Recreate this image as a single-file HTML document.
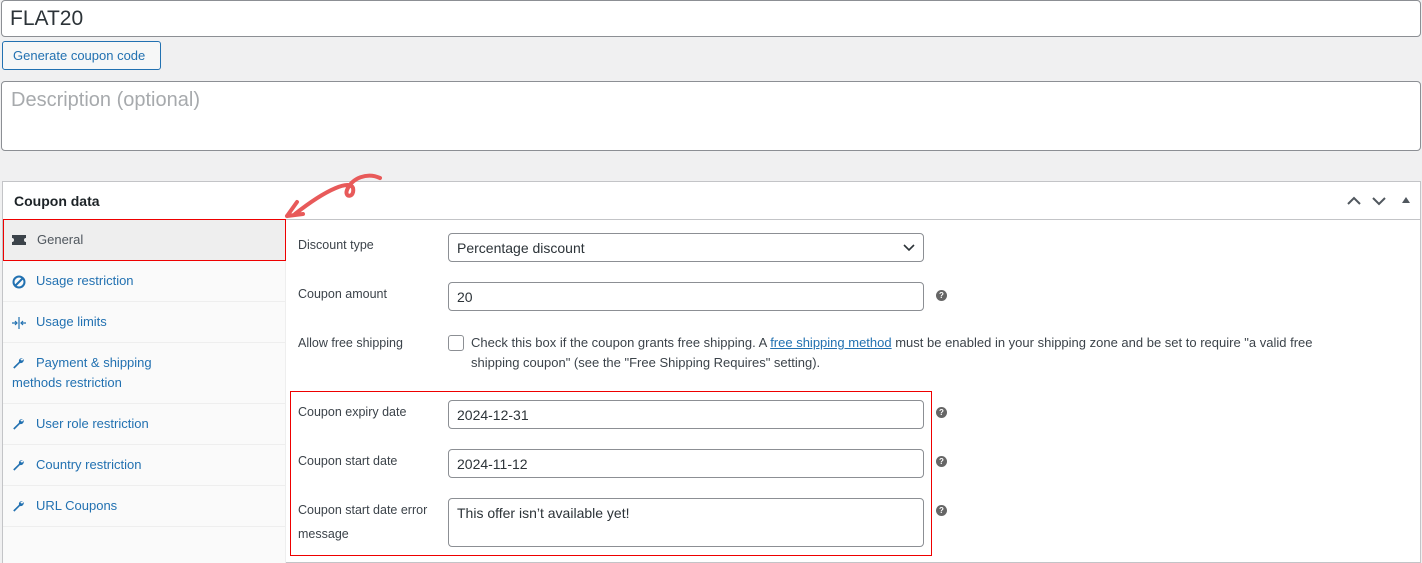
<!DOCTYPE html>
<html><head><style>
*{box-sizing:border-box;margin:0;padding:0}
body{width:1422px;height:563px;background:#f0f0f1;font-family:"Liberation Sans",sans-serif;font-size:13px;color:#3c434a;position:relative;overflow:hidden}
.abs{position:absolute}
.title{left:1px;top:0;width:1420px;height:37px;background:#fff;border:1px solid #8c8f94;border-radius:4px;font-size:21px;color:#2c3338;padding:6px 8px}
.btn{left:2px;top:41px;width:159px;height:29px;border:1px solid #2271b1;border-radius:3px;background:#f6f7f7;color:#2271b1;font-size:13px;padding:6px 10px}
.desc{left:1px;top:81px;width:1420px;height:70px;background:#fff;border:1px solid #8c8f94;border-radius:4px;font-size:20px;color:#a7aaad;padding:7px 9px}
.panel{left:2px;top:181px;width:1419px;height:382px;background:#fff;border:1px solid #c3c4c7}
.hdr{left:0;top:0;width:1417px;height:38px;border-bottom:1px solid #c3c4c7}
.hdr b{position:absolute;left:11px;top:11px;font-size:14px;color:#1d2327}
.side{left:0;top:37px;width:283px;height:344px;background:#fafafa;border-right:1px solid #eee}
.it{position:absolute;left:0;width:283px;height:41px;border-bottom:1px solid #eee;color:#2271b1;padding:10px 0 0 33px;line-height:20px}
.it i{position:absolute;left:9px;top:14px;font-style:normal;line-height:0}
.lbl{position:absolute;left:295px;font-size:12.5px;color:#3c434a}
.inp{position:absolute;left:445px;width:476px;height:29px;border:1px solid #8c8f94;border-radius:4px;padding:6px 8px;font-size:14px;color:#2c3338;background:#fff}
.q{position:absolute;left:933px;width:11px;height:11px;border-radius:50%;background:#666;color:#fff;font-size:8px;text-align:center;line-height:11px;font-weight:bold}
</style></head><body>
<div class="abs title">FLAT20</div>
<div class="abs btn">Generate coupon code</div>
<div class="abs desc">Description (optional)</div>
<svg width="0" height="0" style="position:absolute"><defs><symbol id="w" viewBox="0 0 12 12"><path d="M11 1.2a3 3 0 0 0-4 3.6L1.2 10.4 2.4 11.6 8 6a3 3 0 0 0 3.6-3.9L10 3.7 9 3 8.3 2z" fill="#2271b1"/></symbol></defs></svg>
<div class="abs panel">
 <div class="abs hdr"><b>Coupon data</b>
  <svg class="abs" style="left:1343px;top:13px" width="70" height="12"><path d="M2 9l6-6 6 6M27 3l6 6 6-6" stroke="#50575e" stroke-width="2" fill="none"/><path d="M56 8l4-6 4 6z" fill="#50575e"/></svg>
 </div>
 <div class="abs side">
  <div class="it" style="top:0;background:#eee;color:#50575e;border:1px solid #e00;height:42px"><i style="left:8px;top:15px"><svg width="14" height="10"><path d="M0 0h14v3a2 2 0 0 0 0 4v3H0V7a2 2 0 0 0 0-4z" fill="#3c434a"/></svg></i>General</div>
  <div class="it" style="top:42px"><i style="top:14px"><svg width="14" height="14"><circle cx="7" cy="7" r="5.5" stroke="#2271b1" stroke-width="2" fill="none"/><path d="M3 11L11 3" stroke="#2271b1" stroke-width="2"/></svg></i>Usage restriction</div>
  <div class="it" style="top:83px"><i style="top:15px"><svg width="14" height="12"><path d="M7 0v12M0 6h5M9 6h5M3 4l2 2-2 2M11 4l-2 2 2 2" stroke="#2271b1" stroke-width="1.2" fill="none"/></svg></i>Usage limits</div>
  <div class="it" style="top:124px;height:61px;padding-left:9px;text-indent:24px">Payment &amp; shipping<br>methods restriction<i style="text-indent:0;top:14px"><svg width="12" height="12"><use href="#w"/></svg></i></div>
  <div class="it" style="top:185px"><i><svg width="12" height="12"><use href="#w"/></svg></i>User role restriction</div>
  <div class="it" style="top:226px"><i><svg width="12" height="12"><use href="#w"/></svg></i>Country restriction</div>
  <div class="it" style="top:267px"><i><svg width="12" height="12"><use href="#w"/></svg></i>URL Coupons</div>
 </div>
 <div class="lbl" style="top:56px">Discount type</div>
 <div class="inp" style="top:51px">Percentage discount<svg style="position:absolute;right:8px;top:10px" width="12" height="8"><path d="M1 1l5 5 5-5" stroke="#2c3338" stroke-width="1.6" fill="none"/></svg></div>
 <div class="lbl" style="top:105px">Coupon amount</div>
 <div class="inp" style="top:100px">20</div><div class="q" style="top:108px">?</div>
 <div class="lbl" style="top:154px">Allow free shipping</div>
 <div class="abs" style="left:445px;top:153px;width:16px;height:16px;border:1px solid #8c8f94;border-radius:3px;background:#fff"></div>
 <div class="abs" style="left:468px;top:151px;width:888px;line-height:20px;font-size:13px">Check this box if the coupon grants free shipping. A <span style="color:#2271b1;text-decoration:underline">free shipping method</span> must be enabled in your shipping zone and be set to require "a valid free shipping coupon" (see the "Free Shipping Requires" setting).</div>
 <div class="abs" style="left:287px;top:209px;width:642px;height:165px;border:1px solid #e00"></div>
 <div class="lbl" style="top:223px">Coupon expiry date</div>
 <div class="inp" style="top:218px">2024-12-31</div><div class="q" style="top:225px">?</div>
 <div class="lbl" style="top:272px">Coupon start date</div>
 <div class="inp" style="top:267px">2024-11-12</div><div class="q" style="top:274px">?</div>
 <div class="lbl" style="line-height:24px;top:316px">Coupon start date error<br>message</div>
 <div class="inp" style="top:316px;height:49px">This offer isn’t available yet!</div><div class="q" style="top:323px">?</div>
</div>
<svg class="abs" style="left:282px;top:170px" width="110" height="50"><path d="M98 8C85 2 70 8 65 20c-3 8 8 8 6-2-3-8-25 0-58 26M5 46l10-14M5 46l16-2" stroke="#e85a5a" stroke-width="4" fill="none" stroke-linecap="round"/></svg>
</body></html>
